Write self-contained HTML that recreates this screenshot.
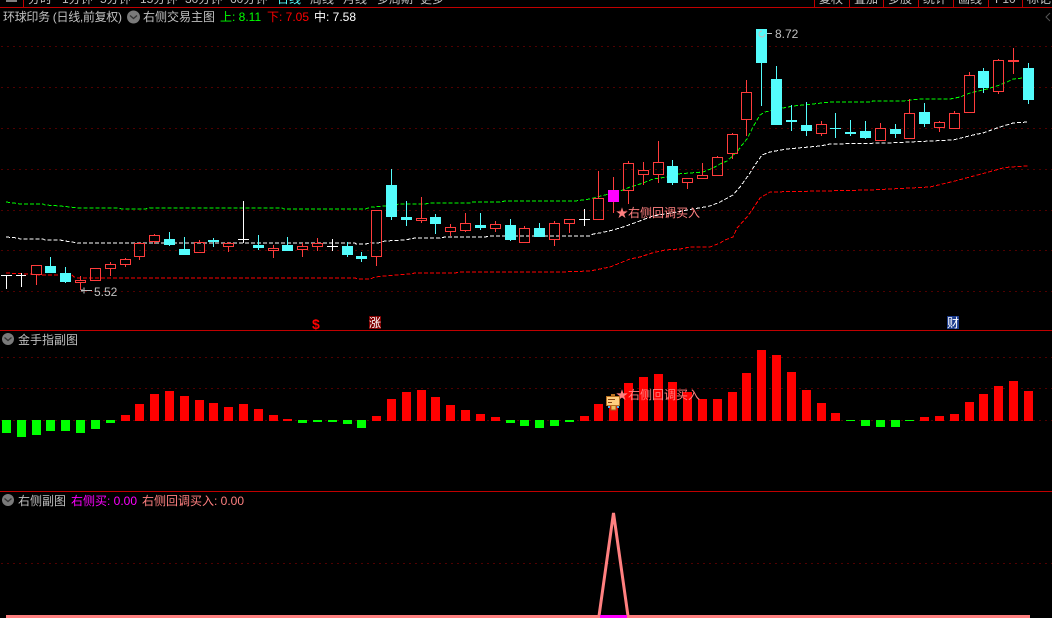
<!DOCTYPE html>
<html lang="zh"><head><meta charset="utf-8"><title>右侧交易主图</title>
<style>
html,body{margin:0;padding:0;background:#000;width:1052px;height:618px;overflow:hidden}
svg{display:block;position:absolute;left:0;top:0}
text{font-family:"Liberation Sans","WenQuanYi Zen Hei","Noto Sans CJK SC",sans-serif;font-size:12px;fill:#c0c0c0}
.c{shape-rendering:crispEdges}
</style></head><body>
<svg width="1052" height="618" viewBox="0 0 1052 618" xmlns="http://www.w3.org/2000/svg">
<!-- top menu -->
<g font-size="12">
<text x="28" y="3">分时</text><text x="62" y="3">1分钟</text><text x="100" y="3">5分钟</text><text x="140" y="3">15分钟</text><text x="185" y="3">30分钟</text><text x="230" y="3">60分钟</text>
<text x="277" y="3" style="fill:#54fcfc">日线</text><text x="310" y="3">周线</text><text x="343" y="3">月线</text><text x="377" y="3">多周期</text><text x="420" y="3">更多</text>
<text x="819" y="3">复权</text><text x="854" y="3">叠加</text><text x="888" y="3">多股</text><text x="923" y="3">统计</text><text x="958" y="3">画线</text><text x="995" y="3">F10</text><text x="1027" y="3">标记</text>
</g>
<g class="c">
<rect x="6" y="0" width="11" height="2" fill="#808080"/>
<path d="M23.5 0V7M814.5 0V7M849.5 0V7M883.5 0V7M918.5 0V7M953.5 0V7M988.5 0V7M1022.5 0V7" stroke="#c00000" fill="none"/>
<rect x="0" y="7" width="1052" height="1" fill="#c00000"/>
<rect x="0" y="330" width="1052" height="1" fill="#c00000"/>
<rect x="0" y="491" width="1052" height="1" fill="#c00000"/>
<path d="M1.5 46.5H1052M1.5 87.5H1052M1.5 128.5H1052M1.5 169.5H1052M1.5 210.5H1052M1.5 250.5H1052M1.5 291.5H1052M1.5 357.5H1052M1.5 388.5H1052M1.5 420.5H1052M1.5 563.5H1052" stroke="#a00000" stroke-dasharray="1 5" fill="none"/>
</g>
<!-- moving lines -->
<g class="c" fill="none" stroke-dasharray="4 2">
<polyline stroke="#00ff00" points="6,202 14,203 20,204 43,204 45,205 60,206 70,207 78,208 118,208 122,209 145,209 150,208 260,208 282,208 284,209 365,209 372,207 385,206 400,204 425,204 430,203 470,203 472,202 500,202 505,201 575,201 590,199 597,197 617,192 623,190 630,187 637,185 643,183 653,179 660,178 667,177 677,174 690,173 703,172 713,168 720,164 727,161 737,152 742,145 747,139 753,127 760,115 765,112 783,108 793,106 813,104 830,102 870,102 873,101 903,101 920,99 950,99 960,97 970,93 987,89 997,86 1007,82 1013,79 1023,78"/>
<polyline stroke="#ffffff" points="6,237 18,238 20,239 43,239 45,240 60,240 65,241 72,242 78,243 355,243 356,244 365,244 372,243 378,243 385,241 405,240 415,238 440,238 445,237 485,237 490,236 590,236 593,234 600,233 613,230 623,227 637,222 653,216 677,212 693,209 710,206 720,202 733,195 740,187 750,173 755,165 762,155 770,152 787,149 820,146 830,144 887,143 953,140 973,135 983,133 997,128 1013,123 1028,122"/>
<polyline stroke="#ff0000" points="6,273 30,274 40,275 72,275 74,277 78,278 355,278 358,279 370,279 375,277 385,276 395,275 410,274 415,273 455,273 460,272 560,272 590,271 600,269 610,267 620,263 630,259 640,257 652,253 665,250 680,249 690,247 710,247 720,243 725,240 733,237 737,228 747,217 752,210 760,198 765,195 770,192 820,191 870,190 930,187 955,181 985,173 1003,168 1010,167 1028,166"/>
</g>
<!-- candles -->
<g class="c">
<path fill="none" stroke="#54fcfc" d="M50.5 257V273M65.5 267V283M169.5 232V246M184.5 237V255M213.5 238V247M258.5 235V250M287.5 237V251M347.5 242V257M361.5 252V262M391.5 169V220M406.5 201V226M435.5 214V234M480.5 213V230M510.5 219V241M539.5 223V237M672.5 160V185M761.5 29V106M776.5 66V125M791.5 105V131M806.5 102V136M835.5 113V138M850.5 120V136M865.5 121V139M895.5 124V138M924.5 103V127M983.5 68V93M1028.5 63V104"/>
<path fill="#54fcfc" d="M45 266h11v7h-11zM60 273h11v9h-11zM164 239h11v6h-11zM179 249h11v6h-11zM208 240h11v2h-11zM253 245h11v3h-11zM282 245h11v6h-11zM342 246h11v9h-11zM356 256h11v3h-11zM386 185h11v32h-11zM401 217h11v3h-11zM430 217h11v7h-11zM475 225h11v3h-11zM505 225h11v15h-11zM534 228h11v9h-11zM667 166h11v17h-11zM756 29h11v34h-11zM771 79h11v46h-11zM786 120h11v2h-11zM801 125h11v6h-11zM830 128h11v1h-11zM845 132h11v2h-11zM860 131h11v7h-11zM890 129h11v5h-11zM919 112h11v12h-11zM978 71h11v17h-11zM1023 68h11v32h-11z"/>
<path fill="none" stroke="#ff3c3c" d="M36.5 275V285M80.5 276V280M80.5 283V290M110.5 262V264M110.5 269V276M125.5 258V259M125.5 265V267M139.5 242V243M139.5 257V260M154.5 234V235M154.5 242V244M199.5 240V242M228.5 242V243M228.5 247V252M273.5 245V248M273.5 251V258M302.5 243V246M302.5 250V257M317.5 238V243M317.5 247V251M376.5 257V266M421.5 197V218M421.5 221V223M450.5 224V227M450.5 232V236M465.5 213V223M465.5 231V232M495.5 221V224M495.5 229V232M524.5 226V228M554.5 221V223M554.5 240V246M569.5 224V233M598.5 171V198M613.5 177V190M613.5 202V213M628.5 161V163M628.5 191V204M643.5 162V170M643.5 175V185M658.5 141V162M658.5 175V183M687.5 183V189M702.5 163V175M717.5 156V157M732.5 133V134M732.5 154V159M746.5 80V92M746.5 120V136M821.5 121V124M821.5 134V136M880.5 123V128M909.5 99V113M939.5 121V122M939.5 128V132M954.5 111V113M969.5 72V75M998.5 59V60M998.5 92V94M1013.5 48V74"/>
<path fill="none" stroke="#ff3c3c" d="M31.5 265.5h10v9h-10zM75.5 280.5h10v2h-10zM90.5 268.5h10v12h-10zM105.5 264.5h10v4h-10zM120.5 259.5h10v5h-10zM134.5 243.5h10v13h-10zM149.5 235.5h10v6h-10zM194.5 242.5h10v10h-10zM223.5 243.5h10v3h-10zM268.5 248.5h10v2h-10zM297.5 246.5h10v3h-10zM312.5 243.5h10v3h-10zM371.5 210.5h10v46h-10zM416.5 218.5h10v2h-10zM445.5 227.5h10v4h-10zM460.5 223.5h10v7h-10zM490.5 224.5h10v4h-10zM519.5 228.5h10v14h-10zM549.5 223.5h10v16h-10zM564.5 219.5h10v4h-10zM593.5 198.5h10v21h-10zM623.5 163.5h10v27h-10zM638.5 170.5h10v4h-10zM653.5 162.5h10v12h-10zM682.5 178.5h10v4h-10zM697.5 175.5h10v3h-10zM712.5 157.5h10v18h-10zM727.5 134.5h10v19h-10zM741.5 92.5h10v27h-10zM816.5 124.5h10v9h-10zM875.5 128.5h10v12h-10zM904.5 113.5h10v25h-10zM934.5 122.5h10v5h-10zM949.5 113.5h10v15h-10zM964.5 75.5h10v37h-10zM993.5 60.5h10v31h-10zM1008.5 60.5h10v1h-10z"/>
<rect x="608" y="190" width="11" height="12" fill="#ff00ff"/>
<path fill="none" stroke="#fff" d="M6.5 275V289M1 275.5H12M21.5 273V287M16 275.5H26M243.5 201V243M238 239.5H249M332.5 239V251M327 246.5H338M584.5 209V226M579 219.5H590"/>
</g>
<!-- sub1 bars -->
<g class="c">
<path fill="#00ff00" d="M2 420h9v13h-9zM17 420h9v17h-9zM32 420h9v15h-9zM46 420h9v11h-9zM61 420h9v11h-9zM76 420h9v13h-9zM91 420h9v9h-9zM106 420h9v3h-9zM298 420h9v3h-9zM313 420h9v2h-9zM328 420h9v2h-9zM343 420h9v4h-9zM357 420h9v8h-9zM506 420h9v3h-9zM520 420h9v6h-9zM535 420h9v8h-9zM550 420h9v6h-9zM565 420h9v2h-9zM846 420h9v1h-9zM861 420h9v6h-9zM876 420h9v7h-9zM891 420h9v7h-9zM905 420h9v1h-9z"/>
<path fill="#ff0000" d="M121 415h9v6h-9zM135 404h9v17h-9zM150 394h9v27h-9zM165 391h9v30h-9zM180 396h9v25h-9zM195 400h9v21h-9zM209 403h9v18h-9zM224 407h9v14h-9zM239 404h9v17h-9zM254 409h9v12h-9zM269 415h9v6h-9zM283 419h9v2h-9zM372 416h9v5h-9zM387 399h9v22h-9zM402 392h9v29h-9zM417 390h9v31h-9zM431 397h9v24h-9zM446 405h9v16h-9zM461 410h9v11h-9zM476 414h9v7h-9zM491 417h9v4h-9zM580 416h9v5h-9zM594 404h9v17h-9zM609 400h9v21h-9zM624 383h9v38h-9zM639 377h9v44h-9zM654 374h9v47h-9zM668 382h9v39h-9zM683 392h9v29h-9zM698 399h9v22h-9zM713 399h9v22h-9zM728 392h9v29h-9zM742 373h9v48h-9zM757 350h9v71h-9zM772 355h9v66h-9zM787 372h9v49h-9zM802 390h9v31h-9zM817 403h9v18h-9zM831 413h9v8h-9zM920 417h9v4h-9zM935 416h9v5h-9zM950 414h9v7h-9zM965 402h9v19h-9zM979 394h9v27h-9zM994 386h9v35h-9zM1009 381h9v40h-9zM1024 391h9v30h-9z"/>
</g>
<!-- header text -->
<text x="3" y="21" textLength="119" lengthAdjust="spacing">环球印务 (日线,前复权)</text>
<circle cx="133.5" cy="17" r="6.5" fill="#7a7a7a"/><path d="M130 15.5l3.5 3 3.5-3" fill="none" stroke="#333" stroke-width="1.3"/>
<text x="143" y="21">右侧交易主图</text>
<text x="220" y="21" style="fill:#00ff00">上: 8.11</text>
<text x="267" y="21" style="fill:#ff0000">下: 7.05</text>
<text x="314" y="21" style="fill:#fff">中: 7.58</text>
<path d="M1050 13l-4 4 4 4" fill="none" stroke="#555"/>
<!-- annotations -->
<path class="c" d="M81 290.5H92M84 287.5V293.5M82 289V292" stroke="#c0c0c0" fill="none"/>
<text x="94" y="296">5.52</text>
<path d="M772 33.5H767M762 31a3 3 0 1 0 3 3" stroke="#c0c0c0" fill="none"/>
<text x="775" y="38">8.72</text>
<text x="616" y="217" style="fill:#ff8080">★右侧回调买入</text>
<text x="312" y="329" style="fill:#ff0000;font-weight:bold;font-size:14px">$</text>
<rect x="369" y="316" width="12" height="13" fill="#800000"/>
<text x="369" y="327" style="fill:#fff">涨</text>
<rect x="947" y="316" width="12" height="13" fill="#1c3c8c"/>
<text x="947" y="327" style="fill:#fff">财</text>
<!-- sub1 title -->
<circle cx="8" cy="339" r="6" fill="#7a7a7a"/><path d="M4.5 337.5l3.5 3 3.5-3" fill="none" stroke="#333" stroke-width="1.3"/>
<text x="18" y="344">金手指副图</text>
<text x="616" y="399" style="fill:#ff8080">★右侧回调买入</text>
<g class="c">
<rect x="608" y="406" width="2" height="2" fill="#50b0f0"/><rect x="617" y="406" width="2" height="2" fill="#50b0f0"/>
<rect x="611" y="405" width="5" height="5" fill="#f0c060" stroke="#a06020"/>
<rect x="606.5" y="396.5" width="13" height="9" fill="#ffd080" stroke="#b87020"/>
<path d="M608 399.5h7M608 402.5h4" stroke="#804010"/>
<rect x="611" y="394" width="4" height="2" fill="#b87020"/>
</g>
<!-- sub2 -->
<circle cx="8" cy="500" r="6" fill="#7a7a7a"/><path d="M4.5 498.5l3.5 3 3.5-3" fill="none" stroke="#333" stroke-width="1.3"/>
<text x="18" y="505">右侧副图</text>
<text x="71" y="505" style="fill:#ff00ff">右侧买: 0.00</text>
<text x="142" y="505" style="fill:#ff8080">右侧回调买入: 0.00</text>
<path d="M599 616L613.5 513L628 616" fill="none" stroke="#ff8080" stroke-width="3"/>
<g class="c">
<rect x="6" y="615" width="1024" height="3" fill="#ff8080"/>
<rect x="600" y="615" width="27" height="3" fill="#ff00ff"/>
</g>
</svg>
</body></html>
